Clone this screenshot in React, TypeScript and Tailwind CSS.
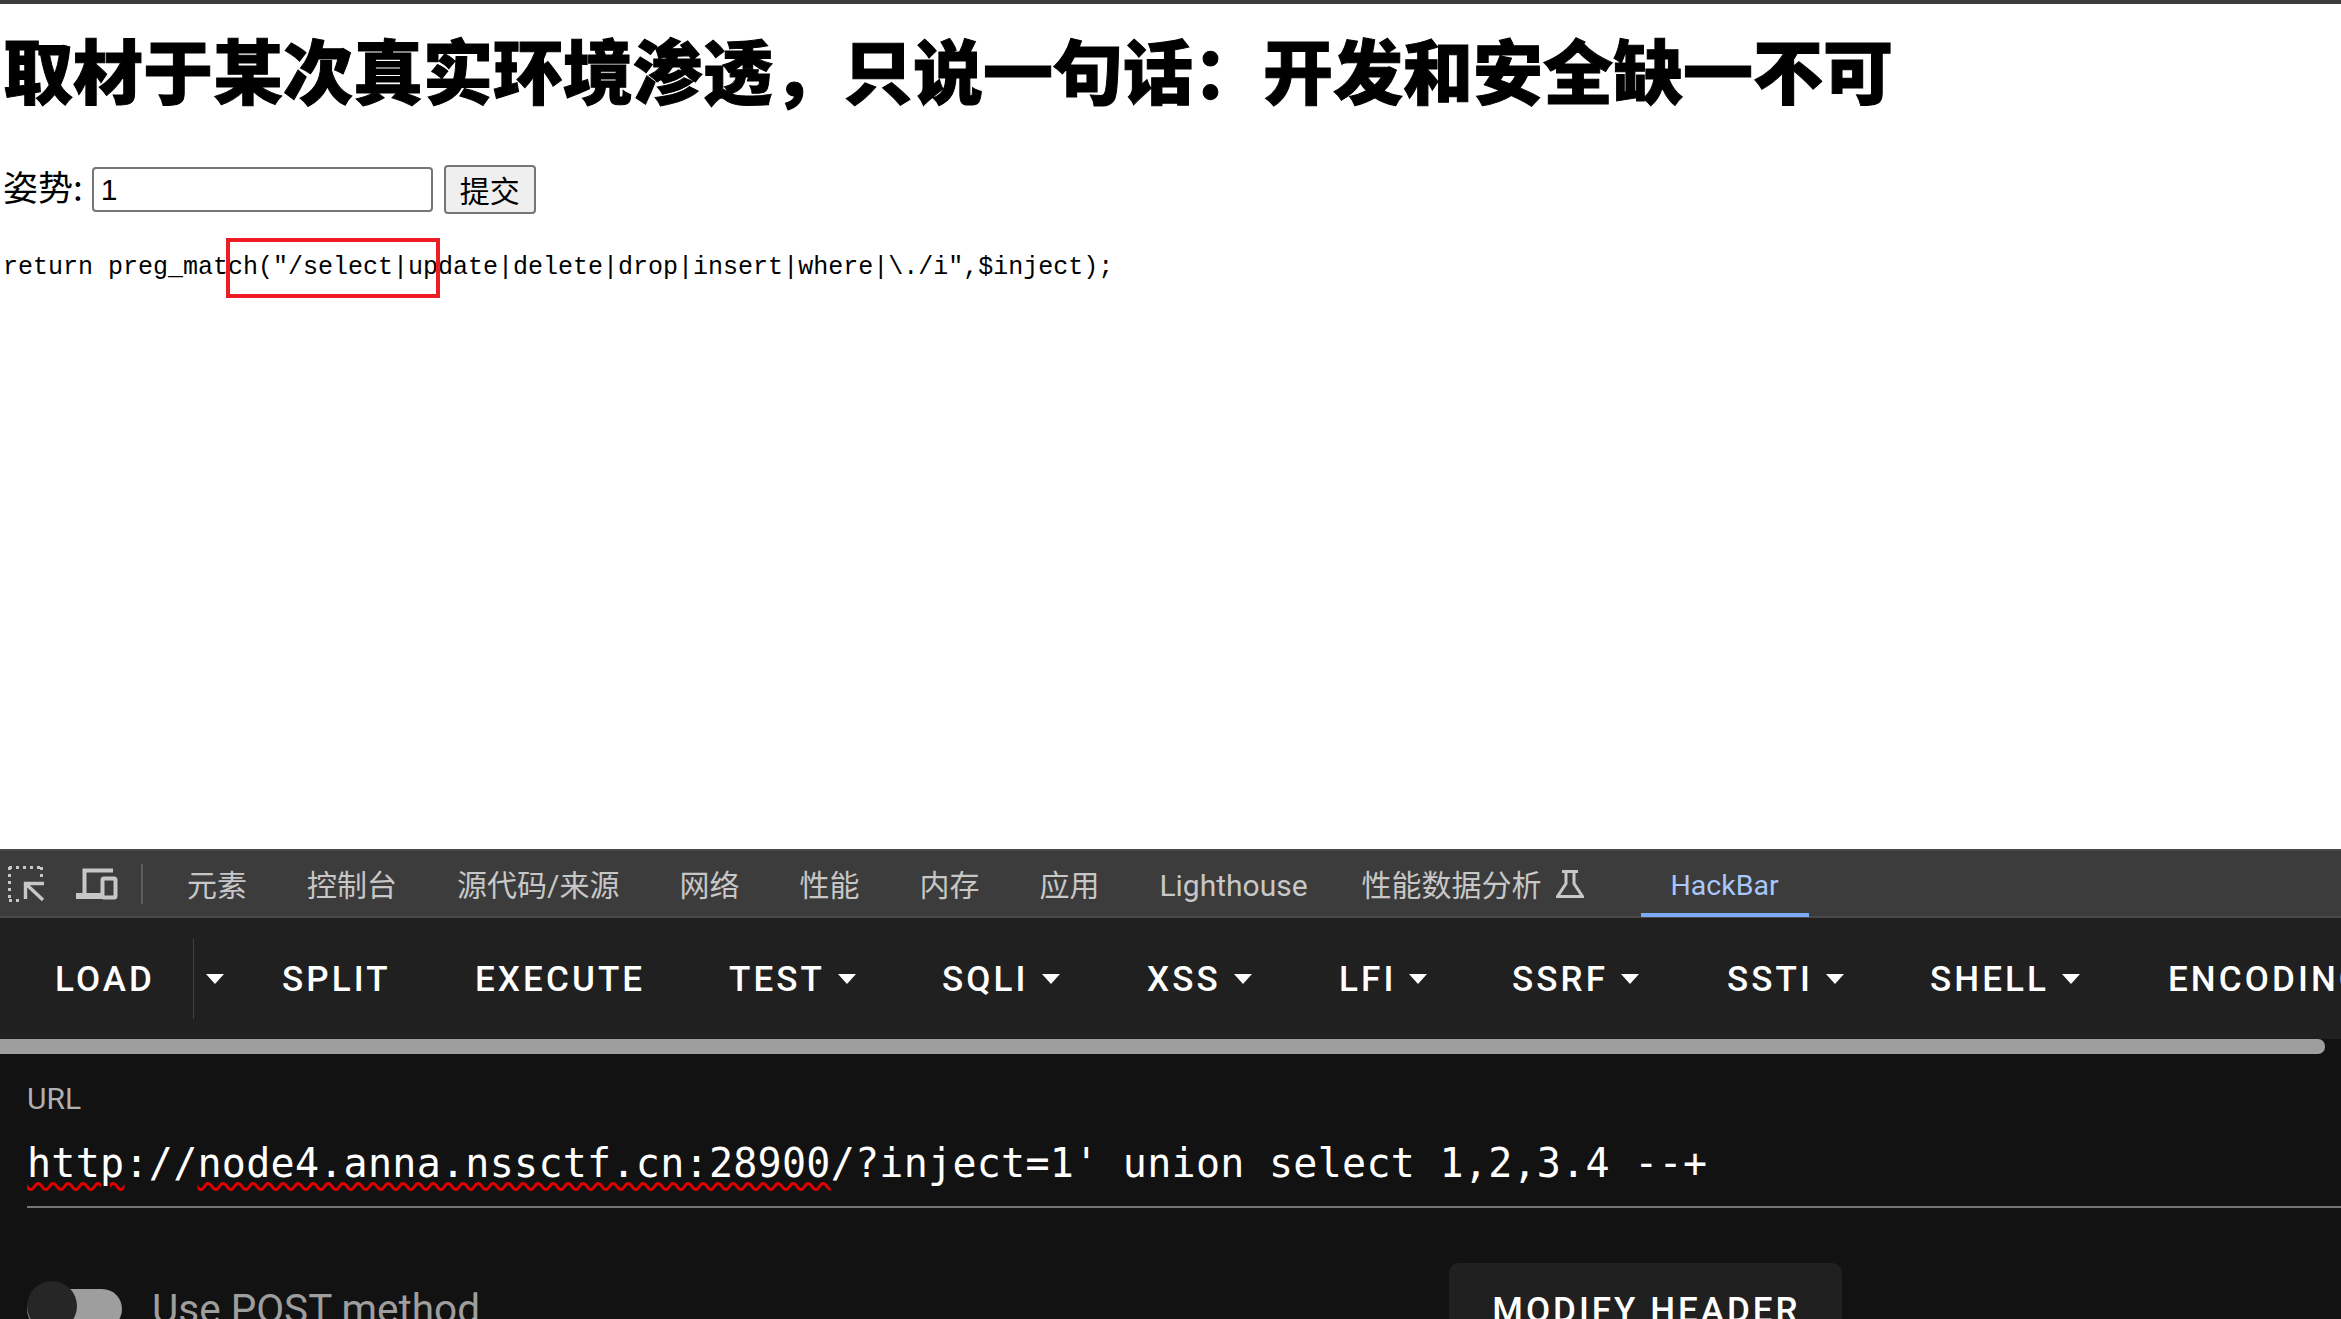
// Page with a form and a docked DevTools panel showing HackBar
const menuItems = [
  { label: "LOAD", width: "w-[227px]", split: true },
  { label: "SPLIT", width: "w-[193px]" },
  { label: "EXECUTE", width: "w-[254px]" },
  { label: "TEST", caret: true, width: "w-[213px]" },
  { label: "SQLI", caret: true, width: "w-[205px]" },
  { label: "XSS", caret: true, width: "w-[192px]" },
  { label: "LFI", caret: true, width: "w-[173px]" },
  { label: "SSRF", caret: true, width: "w-[215px]" },
  { label: "SSTI", caret: true, width: "w-[203px]" },
  { label: "SHELL", caret: true, width: "w-[238px]" },
  { label: "ENCODING", caret: true, width: "w-[300px]" },
];

function Caret() {
  return <span className="inline-block w-0 h-0 border-x-[9px] border-x-transparent border-t-[10px] border-t-white" />;
}

function DevtoolsTabs() {
  const tabs = ["元素", "控制台", "源代码/来源", "网络", "性能", "内存", "应用"];
  return (
    <div className="h-[69px] shrink-0 flex items-center bg-[#3c3c3c] border-t-2 border-t-[#494949] border-b-2 border-b-[#494949] text-[30px] text-[#c7c7c7] font-['Roboto','Noto_Sans_CJK_SC',sans-serif]">
      <svg viewBox="6 864 40 40" className="ml-[6px] w-[40px] h-[40px] shrink-0" fill="none" stroke="#c7c7c7">
        <path d="M9 867.5h33M9.5 867v34M41.5 867v10M9 900.5h12" strokeWidth="3" strokeDasharray="3 4" />
        <path d="M44 883.5H25.5V899M26 884l17 16" strokeWidth="3.4" />
      </svg>
      <svg viewBox="74 864 44 40" className="ml-[28px] w-[44px] h-[40px] shrink-0" fill="none" stroke="#c7c7c7">
        <path d="M76 896h27" strokeWidth="6" />
        <path d="M84.5 894v-23.5H113" strokeWidth="4" />
        <rect x="102.5" y="878.5" width="13" height="19" rx="1.5" strokeWidth="4" />
      </svg>
      <span className="ml-[23px] w-[2px] h-[40px] bg-[#5e5e5e]" />
      <div className="ml-[44px] flex items-center gap-[60px] pt-[4px]">
        {tabs.map((t) => (
          <span key={t}>{t}</span>
        ))}
        <span className="-mr-[6px]">Lighthouse</span>
        <span className="flex items-center gap-[14px]">
          性能数据分析
          <svg viewBox="1556 869 28 30" className="w-[28px] h-[30px] -translate-y-[2px]" fill="none" stroke="#c7c7c7" strokeWidth="3">
            <path d="M1562 871.5h16M1566 871.5v12L1557.5 896.5h25L1574 883.5v-12" />
          </svg>
        </span>
      </div>
      <div className="ml-[57px] h-full w-[168px] pt-[8px] flex items-center justify-center text-[28.5px] text-[#a8c7fa] border-b-4 border-b-[#7cacf8] translate-y-[1px]">
        HackBar
      </div>
    </div>
  );
}

function HackBarMenu() {
  return (
    <div className="shrink-0 bg-[#202020]">
      <div className="h-[121px] pl-[55px] flex items-center overflow-hidden text-[35px] font-medium tracking-[3.1px] text-white font-['Roboto',sans-serif]">
        {menuItems.map((m) => (
          <div key={m.label} className={`${m.width} shrink-0 flex items-center`}>
            <span className="translate-y-[2px]">{m.label}</span>
            {m.caret && (
              <span className="ml-[13px] flex">
                <Caret />
              </span>
            )}
            {m.split && (
              <>
                <span className="ml-[38px] w-px h-[80px] bg-[#3f3f3f]" />
                <span className="ml-[12px] flex">
                  <Caret />
                </span>
              </>
            )}
          </div>
        ))}
      </div>
      <div className="h-[15px] bg-[#121212]">
        <div className="h-full w-[2325px] bg-[#9e9e9e] rounded-r-[7px]" />
      </div>
    </div>
  );
}

export default function App() {
  return (
    <div className="h-[1319px] w-[2341px] overflow-hidden flex flex-col bg-white font-['Noto_Sans_CJK_SC',sans-serif]">
      <div className="h-[4px] shrink-0 bg-[#3c3c3c]" />
      <main className="relative h-[845px] shrink-0 pl-[3px] text-black">
        <h1 className="mt-[15px] text-[70px] leading-[100px] font-black whitespace-nowrap [-webkit-text-stroke:1px_black]">
          取材于某次真实环境渗透，只说一句话：开发和安全缺一不可
        </h1>
        <form className="mt-[45px] flex items-center text-[35px] h-[50px]">
          <label className="-translate-y-[3px]">姿势:</label>
          <input
            readOnly
            value="1"
            className="ml-[9px] w-[341px] h-[45px] px-[7px] text-[30px] font-['Liberation_Sans',sans-serif] text-black border-2 border-[#767676] rounded-[4px] bg-white"
          />
          <button type="button" className="ml-[11px] w-[92px] h-[49px] text-[30px] leading-none bg-[#efefef] border-2 border-[#767676] rounded-[4px]">
            提交
          </button>
        </form>
        <p className="mt-[37px] font-['Liberation_Mono',monospace] text-[25px] leading-[34px] whitespace-nowrap">
          {`return preg_match("/select|update|delete|drop|insert|where|\\./i",$inject);`}
        </p>
        <div className="absolute left-[226px] top-[234px] w-[214px] h-[60px] border-[4px] border-[#ee1c25]" />
      </main>
      <DevtoolsTabs />
      <HackBarMenu />
      <section className="flex-1 bg-[#121212] pl-[27px] min-h-0 overflow-hidden">
        <div className="mt-[27px] text-[30px] leading-[36px] text-[#b0b0b0] font-['Roboto',sans-serif]">URL</div>
        <div className="mt-[16px] h-[75px] border-b-2 border-b-[#757575] font-['DejaVu_Sans_Mono',monospace] text-[40px] leading-[60px] tracking-[0.27px] text-white whitespace-nowrap">
          <span className="underline decoration-wavy decoration-[#e00000] decoration-[3px] underline-offset-[5px]">http</span>
          ://
          <span className="underline decoration-wavy decoration-[#e00000] decoration-[3px] underline-offset-[5px]">node4.anna.nssctf.cn:28900</span>
          /?inject=1' union select 1,2,3.4 --+
        </div>
        <div className="mt-[55px] flex items-start">
          <div className="relative mt-[26px] w-[95px] h-[40px] rounded-full bg-[#9e9e9e] shrink-0">
            <div className="absolute left-0 top-[-8px] w-[50px] h-[50px] rounded-full bg-[#262626]" />
          </div>
          <div className="ml-[30px] mt-[22px] w-[1297px] shrink-0 text-[40.5px] leading-[48px] text-[#9e9e9e] font-['Roboto',sans-serif]">Use POST method</div>
          <div className="w-[393px] h-[90px] rounded-[10px] bg-[#202020] flex justify-center pl-[2px] pt-[28px] text-[35px] leading-[40px] tracking-[3px] font-medium text-white font-['Roboto',sans-serif]">
            MODIFY HEADER
          </div>
        </div>
      </section>
    </div>
  );
}
